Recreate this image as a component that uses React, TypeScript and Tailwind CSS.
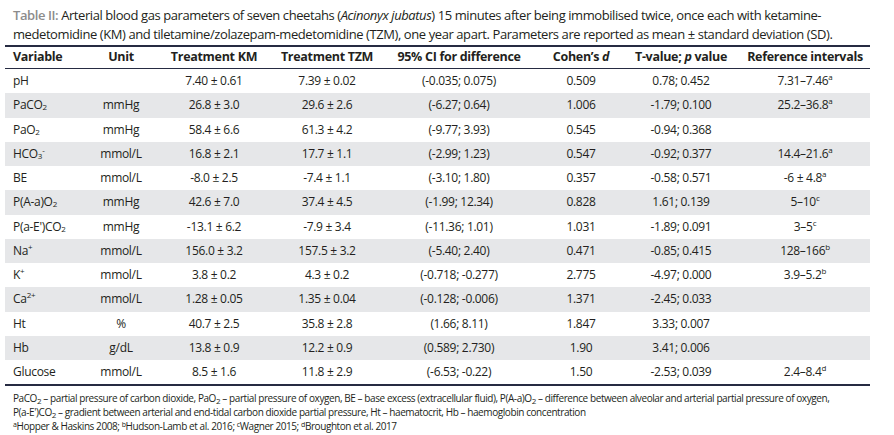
import React from 'react';

type Row = {
  variable: React.ReactNode;
  unit: string;
  km: string;
  tzm: string;
  ci: string;
  d: string;
  t: string;
  ref: React.ReactNode;
};

const Sub = ({ children }: { children: React.ReactNode }) => (
  <sub className="text-[8px] relative top-[2px] align-baseline">{children}</sub>
);

const Sup = ({ children }: { children: React.ReactNode }) => (
  <sup className="text-[8px] relative -top-[4px] align-baseline">{children}</sup>
);

const NoteSup = ({ children }: { children: React.ReactNode }) => (
  <sup className="text-[7px] relative -top-[3px] align-baseline leading-none">{children}</sup>
);

const rows: Row[] = [
  { variable: 'pH', unit: '', km: '7.40 ± 0.61', tzm: '7.39 ± 0.02', ci: '(-0.035; 0.075)', d: '0.509', t: '0.78; 0.452', ref: <>7.31–7.46<Sup>a</Sup></> },
  { variable: <>PaCO<Sub>2</Sub></>, unit: 'mmHg', km: '26.8 ± 3.0', tzm: '29.6 ± 2.6', ci: '(-6.27; 0.64)', d: '1.006', t: '-1.79; 0.100', ref: <>25.2–36.8<Sup>a</Sup></> },
  { variable: <>PaO<Sub>2</Sub></>, unit: 'mmHg', km: '58.4 ± 6.6', tzm: '61.3 ± 4.2', ci: '(-9.77; 3.93)', d: '0.545', t: '-0.94; 0.368', ref: '' },
  { variable: <>HCO<Sub>3</Sub><Sup>-</Sup></>, unit: 'mmol/L', km: '16.8 ± 2.1', tzm: '17.7 ± 1.1', ci: '(-2.99; 1.23)', d: '0.547', t: '-0.92; 0.377', ref: <>14.4–21.6<Sup>a</Sup></> },
  { variable: 'BE', unit: 'mmol/L', km: '-8.0 ± 2.5', tzm: '-7.4 ± 1.1', ci: '(-3.10; 1.80)', d: '0.357', t: '-0.58; 0.571', ref: <>-6 ± 4.8<Sup>a</Sup></> },
  { variable: <>P(A-a)O<Sub>2</Sub></>, unit: 'mmHg', km: '42.6 ± 7.0', tzm: '37.4 ± 4.5', ci: '(-1.99; 12.34)', d: '0.828', t: '1.61; 0.139', ref: <>5–10<Sup>c</Sup></> },
  { variable: <>P(a-E')CO<Sub>2</Sub></>, unit: 'mmHg', km: '-13.1 ± 6.2', tzm: '-7.9 ± 3.4', ci: '(-11.36; 1.01)', d: '1.031', t: '-1.89; 0.091', ref: <>3–5<Sup>c</Sup></> },
  { variable: <>Na<Sup>+</Sup></>, unit: 'mmol/L', km: '156.0 ± 3.2', tzm: '157.5 ± 3.2', ci: '(-5.40; 2.40)', d: '0.471', t: '-0.85; 0.415', ref: <>128–166<Sup>b</Sup></> },
  { variable: <>K<Sup>+</Sup></>, unit: 'mmol/L', km: '3.8 ± 0.2', tzm: '4.3 ± 0.2', ci: '(-0.718; -0.277)', d: '2.775', t: '-4.97; 0.000', ref: <>3.9–5.2<Sup>b</Sup></> },
  { variable: <>Ca<Sup>2+</Sup></>, unit: 'mmol/L', km: '1.28 ± 0.05', tzm: '1.35 ± 0.04', ci: '(-0.128; -0.006)', d: '1.371', t: '-2.45; 0.033', ref: '' },
  { variable: 'Ht', unit: '%', km: '40.7 ± 2.5', tzm: '35.8 ± 2.8', ci: '(1.66; 8.11)', d: '1.847', t: '3.33; 0.007', ref: '' },
  { variable: 'Hb', unit: 'g/dL', km: '13.8 ± 0.9', tzm: '12.2 ± 0.9', ci: '(0.589; 2.730)', d: '1.90', t: '3.41; 0.006', ref: '' },
  { variable: 'Glucose', unit: 'mmol/L', km: '8.5 ± 1.6', tzm: '11.8 ± 2.9', ci: '(-6.53; -0.22)', d: '1.50', t: '-2.53; 0.039', ref: <>2.4–8.4<Sup>d</Sup></> },
];

// column widths: 80 72 114 112 152 92 108 135
const grid = 'grid grid-cols-[80px_72px_114px_112px_152px_92px_108px_135px]';
const cell = 'flex items-center justify-center whitespace-nowrap';

export default function App() {
  return (
    <div className="w-[894px] h-[435px] bg-white text-[#231f20] font-['Open_Sans',sans-serif] overflow-hidden">
      <div className="pl-[13px] pt-[6px] text-[13px] leading-[18.5px] tracking-[-0.42px] whitespace-nowrap">
        <span className="font-semibold text-[#8c8c8c]">Table II:</span> Arterial blood gas parameters of seven cheetahs (<i>Acinonyx jubatus</i>) 15 minutes after being immobilised twice, once each with ketamine-
        <br />
        medetomidine (KM) and tiletamine/zolazepam-medetomidine (TZM), one year apart. Parameters are reported as mean ± standard deviation (SD).
      </div>

      <div className="ml-[5px] w-[865px] mt-[2px] border-t-[2px] border-b-[2px] border-[#262b42]">
        <div className={`${grid} h-[22px] border-b-[1.5px] border-[#262b42] text-[12.5px] font-bold tracking-[-0.3px]`}>
          <div className="flex items-center pl-[8px]">Variable</div>
          <div className={cell}>Unit</div>
          <div className={cell}>Treatment KM</div>
          <div className={cell}>Treatment TZM</div>
          <div className={cell}>95% CI for difference</div>
          <div className={cell}>
            Cohen’s&nbsp;<i>d</i>
          </div>
          <div className={cell}>
            T-value;&nbsp;<i>p</i>&nbsp;value
          </div>
          <div className={`${cell} pl-[5px]`}>Reference intervals</div>
        </div>

        {rows.map((row, index) => (
          <div
            key={index}
            className={`${grid} h-[24.25px] text-[12px] tracking-[-0.3px] ${index % 2 === 1 ? 'bg-[#e6e7e9]' : ''}`}
          >
            <div className="flex items-center pl-[8px] whitespace-nowrap">{row.variable}</div>
            <div className={cell}>{row.unit}</div>
            <div className={cell}>{row.km}</div>
            <div className={cell}>{row.tzm}</div>
            <div className={cell}>{row.ci}</div>
            <div className={cell}>{row.d}</div>
            <div className={cell}>{row.t}</div>
            <div className={`${cell} pl-[5px]`}>{row.ref}</div>
          </div>
        ))}
      </div>

      <div className="pl-[13px] pt-[5px] text-[10px] leading-[14px] tracking-[-0.42px] whitespace-nowrap">
        <div>
          PaCO<Sub>2</Sub> – partial pressure of carbon dioxide, PaO<Sub>2</Sub> – partial pressure of oxygen, BE – base excess (extracellular fluid), P(A-a)O<Sub>2</Sub> – difference between alveolar and arterial partial pressure of oxygen,
        </div>
        <div>
          P(a-E')CO<Sub>2</Sub> – gradient between arterial and end-tidal carbon dioxide partial pressure, Ht – haematocrit, Hb – haemoglobin concentration
        </div>
        <div>
          <NoteSup>a</NoteSup>Hopper &amp; Haskins 2008; <NoteSup>b</NoteSup>Hudson-Lamb et al. 2016; <NoteSup>c</NoteSup>Wagner 2015; <NoteSup>d</NoteSup>Broughton et al. 2017
        </div>
      </div>
    </div>
  );
}
